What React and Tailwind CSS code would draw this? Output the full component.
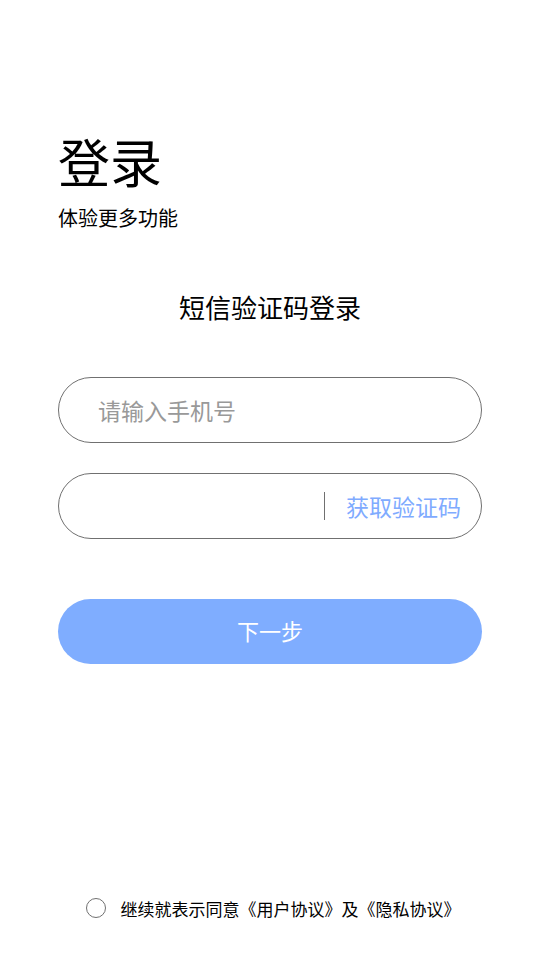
import {useState} from "react";

function App() {
    const [phone, setPhone] = useState('');
    const [code, setCode] = useState('');
    const [agreed, setAgreed] = useState(false);

    return (
        <div className="flex flex-col h-[960px] w-[540px] bg-white px-[58px] font-['Noto_Sans_CJK_SC',sans-serif] text-black">
            <h1 className="mt-[135px] text-[52px] leading-none">
                登录
            </h1>
            <p className="mt-[21px] text-[20px] leading-none">
                体验更多功能
            </p>
            <h2 className="mt-[66px] text-center text-[26px] leading-none">
                短信验证码登录
            </h2>
            <div className="mt-[57px] flex items-center h-[66px] rounded-full border border-[#707070] pl-[39px] pr-[40px]">
                <input
                    type="tel"
                    className="w-full text-[23px] outline-none bg-transparent placeholder:text-[#999999]"
                    placeholder="请输入手机号"
                    value={phone}
                    onChange={(e) => setPhone(e.target.value)}
                />
            </div>
            <div className="mt-[30px] flex items-center h-[66px] rounded-full border border-[#707070] pl-[40px] pr-[20px]">
                <input
                    type="text"
                    className="flex-1 min-w-0 text-[23px] outline-none bg-transparent"
                    value={code}
                    onChange={(e) => setCode(e.target.value)}
                />
                <span className="w-px h-[28px] bg-[#707070]"></span>
                <button className="ml-[21px] text-[23px] text-[#7fabff]">
                    获取验证码
                </button>
            </div>
            <button className="mt-[60px] h-[65px] pb-[2px] rounded-full bg-[#7fadff] text-white text-[22px]">
                下一步
            </button>
            <div className="mt-auto mb-[42px] pl-[6px] flex items-center justify-center gap-[15px]">
                <button
                    onClick={() => setAgreed(!agreed)}
                    className={`w-[20px] h-[20px] rounded-full border-[1.5px] border-[#707070] ${agreed ? 'bg-[#7fadff]' : ''}`}
                ></button>
                <p className="text-[17px] leading-none">
                    继续就表示同意《用户协议》及《隐私协议》
                </p>
            </div>
        </div>
    );
}

export default App;
